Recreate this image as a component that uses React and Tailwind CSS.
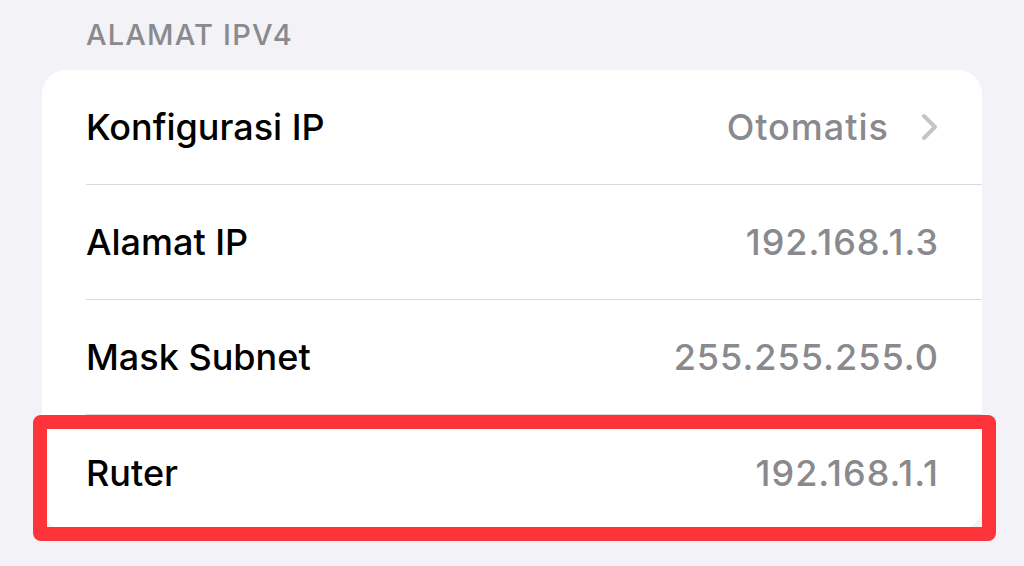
export default function App() {
  const rows = [
    { label: 'Konfigurasi IP', value: 'Otomatis', chevron: true },
    { label: 'Alamat IP', value: '192.168.1.3' },
    { label: 'Mask Subnet', value: '255.255.255.0' },
  ];

  return (
    <div
      className="w-[1024px] h-[566px] overflow-hidden bg-[#f2f2f7]"
      style={{ fontFamily: 'Inter, "Noto Sans", sans-serif' }}
    >
      <div className="h-[70px] pl-[86px] pt-[18px] text-[29px] leading-[34px] font-medium tracking-[1.2px] text-[#8a8a8e]">
        ALAMAT IPV4
      </div>

      <div className="mx-[42px] rounded-[24px] bg-white">
        {rows.map((row) => (
          <div key={row.label} className="pl-[44px]">
            <div className="flex h-[115px] items-center justify-between border-b-[1.5px] border-[#d9d9de] pr-[43px]">
              <span className="text-[36px] font-medium text-black">{row.label}</span>
              <span className="flex items-center gap-[32px] text-[36px] font-medium tracking-[1px] text-[#8a8a8e]">
                {row.value}
                {row.chevron && (
                  <svg width="18" height="28" viewBox="0 0 18 28" fill="none">
                    <path
                      d="M3 3 L14 14 L3 25"
                      stroke="#c4c4c8"
                      strokeWidth="4"
                      strokeLinecap="round"
                      strokeLinejoin="round"
                    />
                  </svg>
                )}
              </span>
            </div>
          </div>
        ))}

        <div className="relative flex h-[115px] items-center justify-between pl-[44px] pr-[43px]">
          <span className="text-[36px] font-medium text-black">Ruter</span>
          <span className="text-[36px] font-medium tracking-[1px] text-[#8a8a8e]">192.168.1.1</span>
          <div className="pointer-events-none absolute -left-[9px] -right-[14px] top-0 -bottom-[11px] rounded-[8px] border-[14px] border-[#fd3439]" />
        </div>
      </div>
    </div>
  );
}
